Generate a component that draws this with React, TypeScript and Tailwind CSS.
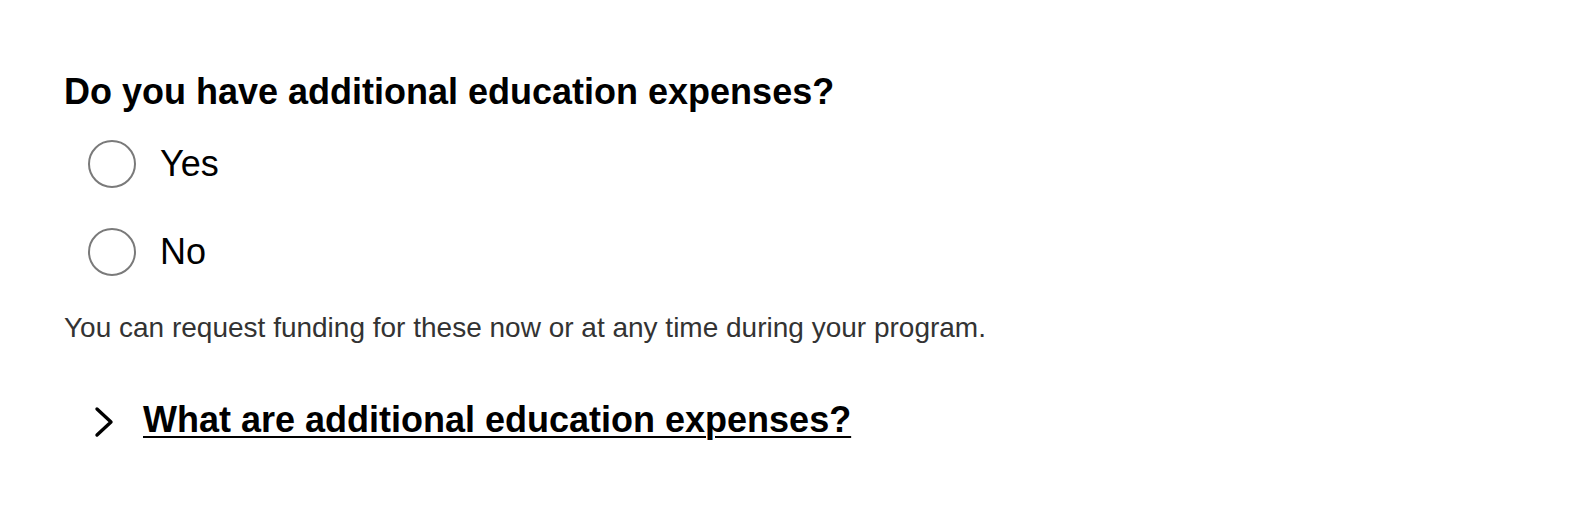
import React, { useState } from 'react';

const options = ['Yes', 'No'];

const App: React.FC = () => {
  const [selected, setSelected] = useState<string | null>(null);

  return (
    <div className="min-h-screen bg-white px-[64px] pt-[74px] font-['Liberation_Sans',Arial,sans-serif]">
      <h2 className="text-[36px] leading-[36px] font-bold text-black">
        Do you have additional education expenses?
      </h2>

      {/* Radio options */}
      <div className="mt-[30px] flex flex-col gap-[40px] pl-[24px]">
        {options.map((opt) => (
          <label key={opt} className="flex h-[48px] items-center gap-[24px] cursor-pointer">
            <span
              onClick={() => setSelected(opt)}
              className="flex h-[48px] w-[48px] shrink-0 items-center justify-center rounded-full border-2 border-[#7a7a7a] bg-white"
            >
              {selected === opt && <span className="h-[24px] w-[24px] rounded-full bg-black" />}
            </span>
            <span className="text-[36px] leading-[48px] text-black">{opt}</span>
          </label>
        ))}
      </div>

      <p className="mt-[38px] text-[28px] leading-[28px] text-[#333333]">
        You can request funding for these now or at any time during your program.
      </p>

      {/* Details toggle */}
      <div className="mt-[60px] flex items-center pl-[30px]">
        <svg width="20" height="32" viewBox="0 0 20 32" className="shrink-0 mt-[3px]">
          <polyline
            points="3,3 17,16 3,29"
            fill="none"
            stroke="#000"
            strokeWidth="3.4"
            strokeLinecap="round"
            strokeLinejoin="round"
          />
        </svg>
        <a href="#" className="ml-[29px] text-[36px] leading-[36px] font-bold text-black underline decoration-2 underline-offset-[4px]">
          What are additional education expenses?
        </a>
      </div>
    </div>
  );
};

export default App;
